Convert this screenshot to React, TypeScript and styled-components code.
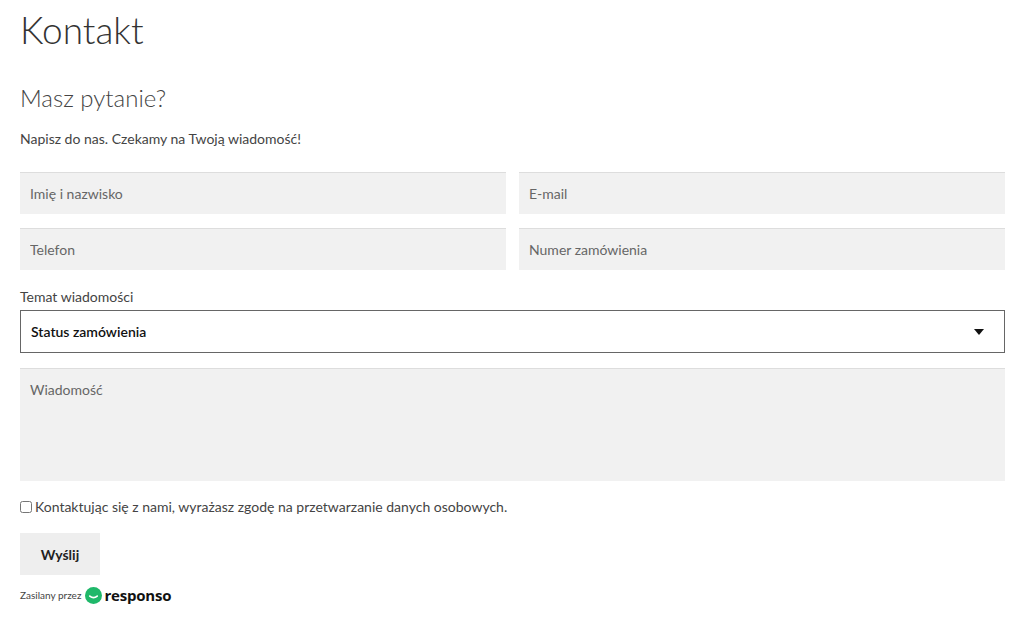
import React from "react";
import styled, {createGlobalStyle} from "styled-components";

const Global = createGlobalStyle`
  body {
    margin: 0;
    background: #fff;
    font-family: Lato, "Open Sans", sans-serif;
    color: #333;
  }
`

export default function App() {
    return (
        <Page>
            <Global/>
            <Title>Kontakt</Title>
            <Subtitle>Masz pytanie?</Subtitle>
            <Lead>Napisz do nas. Czekamy na Twoją wiadomość!</Lead>
            <Grid>
                <Field placeholder="Imię i nazwisko"/>
                <Field placeholder="E-mail"/>
                <Field placeholder="Telefon"/>
                <Field placeholder="Numer zamówienia"/>
            </Grid>
            <Label>Temat wiadomości</Label>
            <Select>
                <span>Status zamówienia</span>
                <svg width="10" height="6" viewBox="0 0 10 6"><path d="M0 0h10L5 6z" fill="#111"/></svg>
            </Select>
            <Area placeholder="Wiadomość"/>
            <Consent>
                <input type="checkbox"/>
                Kontaktując się z nami, wyrażasz zgodę na przetwarzanie danych osobowych.
            </Consent>
            <Submit>Wyślij</Submit>
            <Footer>
                Zasilany przez
                <Brand>
                    <svg width="17" height="17" viewBox="0 0 16 16">
                        <circle cx="8" cy="8" r="8" fill="#1fb86a"/>
                        <path d="M4.5 8.5q3.5 3 7 0" stroke="#fff" strokeWidth="1.6" fill="none" strokeLinecap="round"/>
                    </svg>
                    responso
                </Brand>
            </Footer>
        </Page>
    )
}

const Page = styled.div`
  padding: 8px 19px 0 20px;
`

const Title = styled.h1`
  margin: 0;
  font-weight: 300;
  font-size: 37px;
  line-height: 44px;
  color: #333;
`

const Subtitle = styled.h2`
  margin: 31px 0 0;
  font-weight: 300;
  font-size: 24px;
  line-height: 30px;
  color: #444;
`

const Lead = styled.p`
  margin: 16px 0 0;
  font-size: 14px;
  line-height: 20px;
  color: #444;
`

const Grid = styled.div`
  margin-top: 23px;
  display: grid;
  grid-template-columns: 1fr 1fr;
  column-gap: 13px;
  row-gap: 14px;
`

const Field = styled.input`
  box-sizing: border-box;
  height: 42px;
  border: none;
  border-top: 1px solid #ddd;
  background: #f1f1f1;
  padding: 0 10px;
  font: 14px Lato, sans-serif;
  &::placeholder { color: #666; }
`

const Label = styled.div`
  margin-top: 18px;
  font-size: 14px;
  line-height: 18px;
  color: #444;
`

const Select = styled.div`
  box-sizing: border-box;
  margin-top: 4px;
  height: 43px;
  border: 1px solid #666;
  display: flex;
  align-items: center;
  justify-content: space-between;
  padding: 0 20px 0 10px;
  font-size: 14px;
  font-weight: 600;
  color: #111;
`

const Area = styled.textarea`
  box-sizing: border-box;
  display: block;
  width: 100%;
  margin-top: 15px;
  height: 113px;
  border: none;
  border-top: 1px solid #ddd;
  background: #f1f1f1;
  padding: 12px 10px;
  resize: none;
  font: 14px Lato, sans-serif;
  &::placeholder { color: #666; }
`

const Consent = styled.label`
  margin-top: 17px;
  display: flex;
  align-items: center;
  gap: 3px;
  font-size: 14px;
  color: #444;
  input { margin: 0; width: 12px; height: 12px; }
`

const Submit = styled.button`
  margin-top: 18px;
  width: 80px;
  height: 42px;
  border: none;
  background: #eee;
  font: 700 14px Lato, sans-serif;
  color: #222;
`

const Footer = styled.div`
  margin-top: 10px;
  display: flex;
  align-items: center;
  gap: 4px;
  font-size: 10px;
  color: #444;
`

const Brand = styled.span`
  display: inline-flex;
  align-items: center;
  gap: 2px;
  font: 700 15px "Open Sans", sans-serif;
  color: #111;
  letter-spacing: -0.2px;
`
